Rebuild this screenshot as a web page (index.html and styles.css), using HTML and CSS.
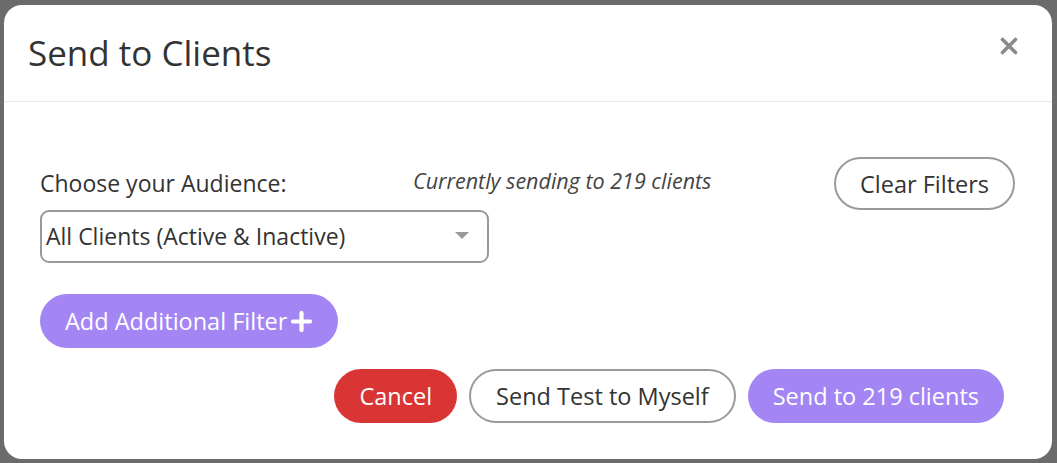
FILE: index.html
```html
<!DOCTYPE html>
<html lang="en">
<head>
    <meta charset="UTF-8">
    <meta name="viewport" content="width=device-width, initial-scale=1.0">
    <title>Send to Clients</title>
    <link rel="stylesheet" href="styles.css">
</head>
<body class="backdrop">

    <div class="modal">
        <div class="modal-header">
            <div class="modal-title">Send to Clients</div>
            <button class="close-button" aria-label="Close">
                <svg width="18" height="18" viewBox="0 0 18 18">
                    <path d="M2.5 2.5 L15.5 15.5 M15.5 2.5 L2.5 15.5" stroke="#8a8a8a" stroke-width="3.6" stroke-linecap="round"/>
                </svg>
            </button>
        </div>

        <div class="modal-body">
            <div class="audience-row">
                <div class="audience-left">
                    <div class="label-line">
                        <span class="audience-label">Choose your Audience:</span>
                        <span class="count-text">Currently sending to 219 clients</span>
                    </div>
                    <div class="select-box">
                        <span>All Clients (Active &amp; Inactive)</span>
                        <span class="caret"></span>
                    </div>
                </div>
                <button class="pill outline clear-button">Clear Filters</button>
            </div>

            <button class="pill purple add-filter">
                Add Additional Filter
                <svg width="21" height="21" viewBox="0 0 21 21">
                    <path d="M10.5 2 V19 M2 10.5 H19" stroke="white" stroke-width="4.2" stroke-linecap="round"/>
                </svg>
            </button>

            <div class="footer">
                <button class="pill red">Cancel</button>
                <button class="pill outline">Send Test to Myself</button>
                <button class="pill purple">Send to 219 clients</button>
            </div>
        </div>
    </div>

</body>
</html>
```

FILE: styles.css
```css
* {
    box-sizing: border-box;
}

.backdrop {
    margin: 0;
    height: 463px;
    padding: 5px 5px 4px 4px;
    background-color: #6b6b6b;
    font-family: 'Open Sans', sans-serif;
    color: #333;
}

.modal {
    height: 100%;
    background: white;
    border-radius: 18px;
    overflow: hidden;
}

.modal-header {
    height: 97px;
    border-bottom: 1px solid #e9e9e9;
    display: flex;
    align-items: center;
    justify-content: space-between;
    padding: 0 34px 0 24px;
}

.modal-title {
    font-size: 35px;
    color: #333;
    padding-bottom: 2px;
}

.close-button {
    border: none;
    background: none;
    padding: 0;
    display: flex;
    margin-bottom: 14px;
}

.modal-body {
    padding: 55px 37px 0 36px;
}

.audience-row {
    display: flex;
    justify-content: space-between;
    align-items: flex-start;
}

.label-line {
    display: flex;
    align-items: center;
    height: 53px;
}

.audience-label {
    width: 373px;
    font-size: 23px;
    margin-bottom: 2px;
}

.count-text {
    font-style: italic;
    font-size: 21.5px;
    color: #444;
    margin-bottom: 7px;
}

.select-box {
    width: 449px;
    height: 53px;
    border: 2px solid #999;
    border-radius: 9px;
    display: flex;
    align-items: center;
    justify-content: space-between;
    padding: 0 18px 2px 4px;
    font-size: 23px;
    color: #333;
}

.caret {
    width: 0;
    height: 0;
    border-left: 7px solid transparent;
    border-right: 7px solid transparent;
    border-top: 7px solid #9a9a9a;
}

.pill {
    font-family: 'Open Sans', sans-serif;
    font-size: 23.5px;
    height: 54px;
    border-radius: 27px;
    padding: 0 25px;
    display: flex;
    align-items: center;
    cursor: pointer;
}

.outline {
    background: white;
    border: 2px solid #9a9a9a;
    color: #333;
}

.purple {
    background-color: #a385f3;
    border: none;
    color: white;
}

.red {
    background-color: #d93535;
    border: none;
    color: white;
}

.clear-button {
    width: 181px;
    height: 53px;
    padding: 0;
    justify-content: center;
}

.add-filter {
    margin-top: 31px;
    width: 298px;
    gap: 4px;
}

.footer {
    display: flex;
    justify-content: flex-end;
    gap: 12px;
    margin-top: 21px;
    margin-right: 11px;
}
```
